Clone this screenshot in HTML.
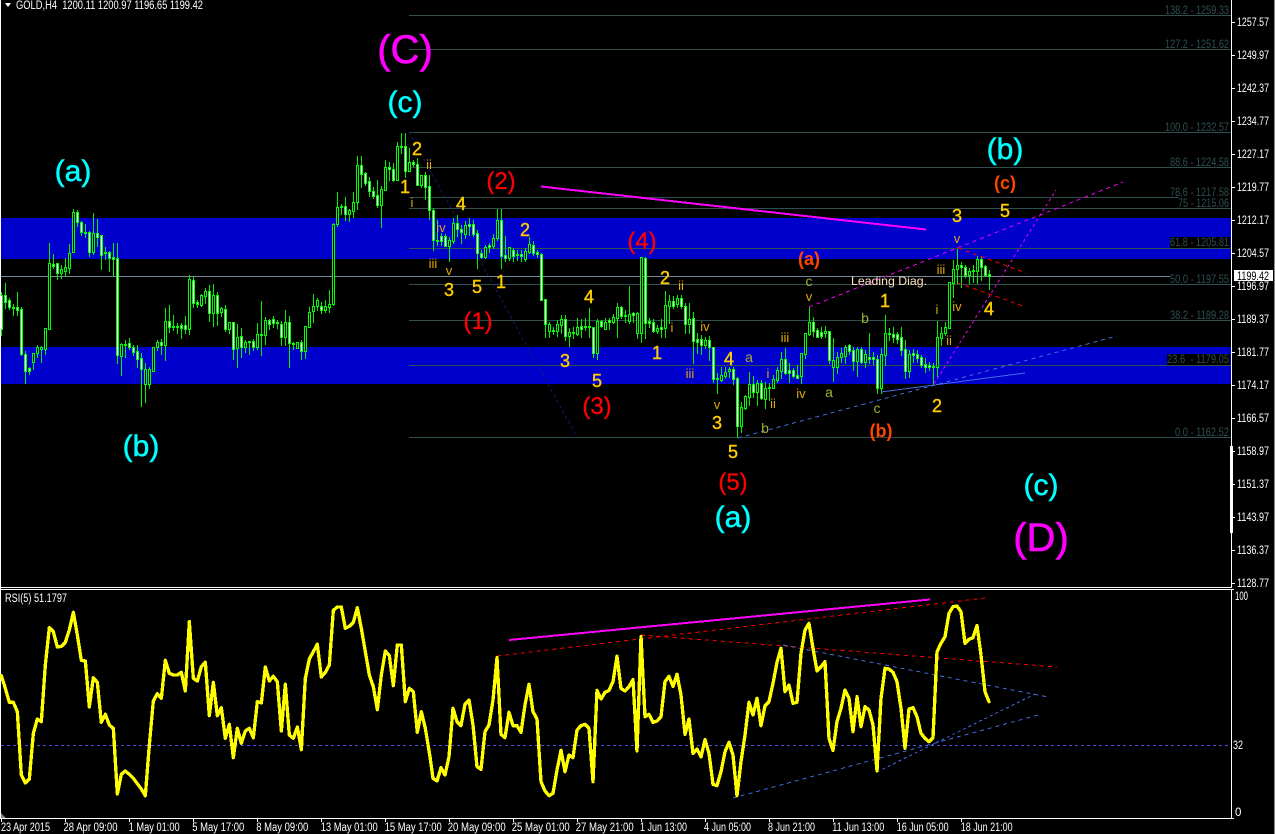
<!DOCTYPE html>
<html><head><meta charset="utf-8"><title>GOLD,H4</title>
<style>
html,body{margin:0;padding:0;background:#000;width:1275px;height:834px;overflow:hidden}
svg{display:block;position:absolute;left:0;top:0}
text{font-family:"Liberation Sans",Arial,sans-serif;white-space:pre}
.ax{fill:#fff;font-size:11.5px}
.fb{fill:#2F4F4F;font-size:11.5px}
.t{fill:#fff;font-size:11.5px}
.C{fill:#FF00FF;stroke:#FF00FF;stroke-width:.6px;font-size:40px;text-anchor:middle}
.c{fill:#00FFFF;stroke:#00FFFF;stroke-width:.5px;font-size:30px;text-anchor:middle}
.r{fill:#FF0000;stroke:#FF0000;stroke-width:.3px;font-size:24px;text-anchor:middle}
.o{fill:#FF4500;font-size:18px;font-weight:bold;text-anchor:middle}
.n{fill:#FFCC00;stroke:#FFCC00;stroke-width:.4px;font-size:18px;text-anchor:middle}
.s{fill:#E0A810;font-size:13px;text-anchor:middle}
.l{fill:#A4AE30;font-size:14px;text-anchor:middle}
</style></head>
<body>
<svg xmlns="http://www.w3.org/2000/svg" width="1275" height="834" viewBox="0 0 1275 834">
<rect width="1275" height="834" fill="#000"/>
<!-- blue zones -->
<rect x="1" y="218" width="1230" height="41" fill="#0000CD"/>
<rect x="1" y="347" width="1230" height="37" fill="#0000CD"/>
<!-- fib lines -->
<g stroke="#2F4F4F" stroke-width="1" shape-rendering="crispEdges">
<path d="M409 15.5H1231M409 49.5H1231M409 132.5H1231M409 167.5H1231M409 197.5H1178M409 208.5H1231M409 248.5H1231M409 284.5H1231M409 320.5H1231M409 365.5H1231M409 437.5H1231"/>
</g>
<path d="M1 276.5H1170" stroke="#778899" stroke-width="1" shape-rendering="crispEdges"/>
<!-- navy dotted -->
<path d="M409 132L576 435" stroke="#191970" stroke-width="1" stroke-dasharray="3 3" fill="none"/>
<!-- candles -->
<path id="wk" fill="none" stroke="#00EE00" stroke-width="1" shape-rendering="crispEdges"/>
<path id="bw" fill="#fff" stroke="#00FF00" stroke-width="1" shape-rendering="crispEdges"/>
<path id="bb" fill="#000" stroke="#00FF00" stroke-width="1" shape-rendering="crispEdges"/>
<!-- trend lines -->
<path d="M541 186.5L926 229.5" stroke="#FF00FF" stroke-width="2" fill="none" shape-rendering="crispEdges"/>
<g fill="none" stroke-width="1" shape-rendering="crispEdges">
<path d="M809 307L1123 182" stroke="#EE00EE" stroke-dasharray="4 4"/>
<path d="M934 384L1056 190" stroke="#EE00EE" stroke-dasharray="3 3"/>
<path d="M958 248L1026 273" stroke="#FF0000" stroke-dasharray="4 4"/>
<path d="M958 283L1026 307" stroke="#FF0000" stroke-dasharray="4 4"/>
<path d="M738 438L1117 336" stroke="#4169E1" stroke-dasharray="4 4"/>
<path d="M881 392L1025 373" stroke="#4169E1"/>
</g>
<!-- fib text -->
<rect x="1170" y="237" width="60" height="11" fill="#000"/>
<rect x="1167" y="354" width="63" height="11" fill="#000"/>
<rect x="1170" y="273" width="60" height="11" fill="#000"/>
<path d="M1170 284.5H1231" stroke="#2F4F4F" shape-rendering="crispEdges"/>
<g class="fb">
<text class="fb" x="1165" y="14" textLength="64" lengthAdjust="spacingAndGlyphs">138.2 - 1259.33</text>
<text class="fb" x="1165" y="48" textLength="64" lengthAdjust="spacingAndGlyphs">127.2 - 1251.62</text>
<text class="fb" x="1165" y="131" textLength="64" lengthAdjust="spacingAndGlyphs">100.0 - 1232.57</text>
<text class="fb" x="1170" y="166" textLength="59" lengthAdjust="spacingAndGlyphs">88.6 - 1224.58</text>
<text class="fb" x="1170" y="196" textLength="59" lengthAdjust="spacingAndGlyphs">78.6 - 1217.58</text>
<text class="fb" x="1178" y="207" textLength="51" lengthAdjust="spacingAndGlyphs">75 - 1215.06</text>
<text class="fb" x="1170" y="246" textLength="59" lengthAdjust="spacingAndGlyphs">61.8 - 1205.81</text>
<text class="fb" x="1170" y="283" textLength="59" lengthAdjust="spacingAndGlyphs">50.0 - 1197.55</text>
<text class="fb" x="1170" y="319" textLength="59" lengthAdjust="spacingAndGlyphs">38.2 - 1189.28</text>
<text class="fb" x="1167" y="363" textLength="62" lengthAdjust="spacingAndGlyphs">23.6  - 1179.05</text>
<text class="fb" x="1175" y="436" textLength="54" lengthAdjust="spacingAndGlyphs">0.0 - 1162.52</text>
</g>
<!-- wave labels -->
<text class="C" x="405" y="63">(C)</text>
<text class="C" x="1041" y="551">(D)</text>
<text class="c" x="405" y="112">(c)</text>
<text class="c" x="73" y="181">(a)</text>
<text class="c" x="141" y="456">(b)</text>
<text class="c" x="733" y="527">(a)</text>
<text class="c" x="1005" y="159">(b)</text>
<text class="c" x="1041" y="495">(c)</text>
<text class="r" x="501" y="189">(2)</text>
<text class="r" x="478" y="329">(1)</text>
<text class="r" x="597" y="414">(3)</text>
<text class="r" x="642" y="249">(4)</text>
<text class="r" x="733" y="490">(5)</text>
<text class="o" x="809" y="265">(a)</text>
<text class="o" x="881" y="437">(b)</text>
<text class="o" x="1005" y="189">(c)</text>
<text class="n" x="417" y="155">2</text>
<text class="n" x="405" y="193">1</text>
<text class="n" x="461" y="210">4</text>
<text class="n" x="449" y="296">3</text>
<text class="n" x="477" y="293">5</text>
<text class="n" x="501" y="288">1</text>
<text class="n" x="525" y="236">2</text>
<text class="n" x="589" y="303">4</text>
<text class="n" x="565" y="367">3</text>
<text class="n" x="597" y="387">5</text>
<text class="n" x="665" y="284">2</text>
<text class="n" x="657" y="359">1</text>
<text class="n" x="729" y="365">4</text>
<text class="n" x="717" y="429">3</text>
<text class="n" x="733" y="458">5</text>
<text class="n" x="885" y="307">1</text>
<text class="n" x="937" y="412">2</text>
<text class="n" x="957" y="222">3</text>
<text class="n" x="1005" y="217">5</text>
<text class="n" x="989" y="315">4</text>
<text class="s" x="429" y="169">ii</text>
<text class="s" x="412" y="207">i</text>
<text class="s" x="441" y="232">iv</text>
<text class="s" x="433" y="268">iii</text>
<text class="s" x="449" y="275">v</text>
<text class="s" x="681" y="290">ii</text>
<text class="s" x="672" y="332">i</text>
<text class="s" x="705" y="331">iv</text>
<text class="s" x="690" y="378">iii</text>
<text class="s" x="717" y="409">v</text>
<text class="s" x="768" y="378">i</text>
<text class="s" x="773" y="408">ii</text>
<text class="s" x="785" y="342">iii</text>
<text class="s" x="801" y="398">iv</text>
<text class="s" x="809" y="301">v</text>
<text class="s" x="941" y="274">iii</text>
<text class="s" x="937" y="314">i</text>
<text class="s" x="957" y="311">iv</text>
<text class="s" x="949" y="345">ii</text>
<text class="s" x="957" y="243">v</text>
<text class="l" x="749" y="362">a</text>
<text class="l" x="765" y="433">b</text>
<text class="l" x="809" y="286">c</text>
<text class="l" x="865" y="323">b</text>
<text class="l" x="829" y="397">a</text>
<text class="l" x="877" y="413">c</text>
<text x="851" y="285" fill="#FFE4C4" font-size="12" textLength="76" lengthAdjust="spacingAndGlyphs">Leading Diag.</text>
<!-- frame -->
<g stroke="#fff" stroke-width="1" shape-rendering="crispEdges" fill="none">
<path d="M0.5 0V819"/>
<path d="M1231.5 0V587"/>
<path d="M0 587.5H1232"/>
<path d="M0 589.5H1232"/>
<path d="M1231.5 589V818.5"/>
<path d="M0 818.5H1232"/>
<path d="M1232 22.5h3M1232 55.5h3M1232 88.5h3M1232 121.5h3M1232 154.5h3M1232 187.5h3M1232 220.5h3M1232 253.5h3M1232 286.5h3M1232 319.5h3M1232 352.5h3M1232 385.5h3M1232 418.5h3M1232 451.5h3M1232 484.5h3M1232 517.5h3M1232 550.5h3M1232 583.5h3"/>
<path d="M1232 589.5h2M1232 818.5h2"/>
<path d="M1.5 819v3M65.5 819v3M129.5 819v3M193.5 819v3M257.5 819v3M321.5 819v3M385.5 819v3M449.5 819v3M513.5 819v3M577.5 819v3M641.5 819v3M705.5 819v3M769.5 819v3M833.5 819v3M897.5 819v3M961.5 819v3"/>
</g>
<rect x="1230" y="446" width="3" height="87" fill="#fff"/>
<rect x="1274" y="0" width="1" height="834" fill="#8a8a8a"/>
<!-- price axis -->
<g>
<text class="ax" x="1237" y="26" textLength="32" lengthAdjust="spacingAndGlyphs">1257.57</text>
<text class="ax" x="1237" y="59" textLength="32" lengthAdjust="spacingAndGlyphs">1249.97</text>
<text class="ax" x="1237" y="92" textLength="32" lengthAdjust="spacingAndGlyphs">1242.37</text>
<text class="ax" x="1237" y="125" textLength="32" lengthAdjust="spacingAndGlyphs">1234.77</text>
<text class="ax" x="1237" y="158" textLength="32" lengthAdjust="spacingAndGlyphs">1227.17</text>
<text class="ax" x="1237" y="191" textLength="32" lengthAdjust="spacingAndGlyphs">1219.77</text>
<text class="ax" x="1237" y="224" textLength="32" lengthAdjust="spacingAndGlyphs">1212.17</text>
<text class="ax" x="1237" y="257" textLength="32" lengthAdjust="spacingAndGlyphs">1204.57</text>
<text class="ax" x="1237" y="290" textLength="32" lengthAdjust="spacingAndGlyphs">1196.97</text>
<text class="ax" x="1237" y="323" textLength="32" lengthAdjust="spacingAndGlyphs">1189.37</text>
<text class="ax" x="1237" y="356" textLength="32" lengthAdjust="spacingAndGlyphs">1181.77</text>
<text class="ax" x="1237" y="389" textLength="32" lengthAdjust="spacingAndGlyphs">1174.17</text>
<text class="ax" x="1237" y="422" textLength="32" lengthAdjust="spacingAndGlyphs">1166.57</text>
<text class="ax" x="1237" y="455" textLength="32" lengthAdjust="spacingAndGlyphs">1158.97</text>
<text class="ax" x="1237" y="488" textLength="32" lengthAdjust="spacingAndGlyphs">1151.37</text>
<text class="ax" x="1237" y="521" textLength="32" lengthAdjust="spacingAndGlyphs">1143.97</text>
<text class="ax" x="1237" y="554" textLength="32" lengthAdjust="spacingAndGlyphs">1136.37</text>
<text class="ax" x="1237" y="587" textLength="32" lengthAdjust="spacingAndGlyphs">1128.77</text>
</g>
<rect x="1234" y="270" width="39" height="11" fill="#fff"/>
<text x="1237" y="280" font-size="11.5" fill="#000" textLength="32" lengthAdjust="spacingAndGlyphs">1199.42</text>
<!-- header -->
<polygon points="5,3 11,3 8,7" fill="#fff"/>
<text class="t" x="16" y="9" textLength="187" lengthAdjust="spacingAndGlyphs">GOLD,H4  1200.11 1200.97 1196.65 1199.42</text>
<!-- RSI -->
<text class="t" x="5" y="602" textLength="62" lengthAdjust="spacingAndGlyphs">RSI(5) 51.1797</text>
<path d="M1 745.5H1231" stroke="#5050E0" stroke-dasharray="3 3" shape-rendering="crispEdges"/>
<g fill="none" stroke-width="1" shape-rendering="crispEdges">
<path d="M497 656L985 598" stroke="#FF0000" stroke-dasharray="4 4"/>
<path d="M641 635L1057 667" stroke="#FF0000" stroke-dasharray="4 4"/>
<path d="M783 645L1048 697" stroke="#4169E1" stroke-dasharray="4 4"/>
<path d="M733 798L1042 714" stroke="#4169E1" stroke-dasharray="4 4"/>
<path d="M877 772L1035 694" stroke="#4169E1" stroke-dasharray="3 3"/>
</g>
<path d="M509 640L930 599.5" stroke="#FF00FF" stroke-width="2" fill="none" shape-rendering="crispEdges"/>
<g fill="none" stroke="#FFFF00" stroke-width="10" stroke-linejoin="round" stroke-linecap="round" shape-rendering="crispEdges">
<polyline transform="translate(0,585) scale(.33333)" points="4,272 16,310 28,352 40,352 52,380 64,570 76,594 88,582 100,445 112,402 124,410 136,240 148,128 160,140 172,186 184,184 196,172 208,135 220,82 232,150 244,226 256,228 268,366 280,278 292,292 304,412 316,388 328,420 340,430 352,627 364,568 376,558 388,568 400,580 412,596 424,612 436,632 448,480 460,348 472,326 484,340 496,226 508,265 520,270 532,270 544,262 556,318 568,110 580,280 592,288 604,245 616,232 628,392 640,292 652,392 664,368 676,460 688,418 700,518 712,430 724,475 736,438 748,430 760,458 772,350 784,354 796,246 808,288 820,274 832,290 844,438 856,298 868,450 880,460 892,426 904,494 916,280 928,222 940,200 952,178 964,276 976,262 988,240 1000,76 1012,66 1024,66 1036,130 1048,124 1060,112 1072,68 1084,130 1096,200 1108,270 1120,305 1132,374 1144,270 1156,198 1168,212 1180,302 1192,180 1204,180 1216,350 1228,310 1240,320 1252,442 1264,380 1276,430 1290,515"/>
<polyline transform="translate(430,585) scale(.33333)" points="0,515 9,580 21,588 33,548 45,570 57,515 69,370 81,410 93,422 105,358 117,345 129,420 141,545 153,553 165,440 177,420 189,345 201,218 213,448 225,458 237,382 249,422 261,422 273,442 285,360 297,298 309,380 321,402 333,590 345,618 357,632 369,625 381,555 393,496 405,560 417,510 429,518 441,435 453,422 465,418 477,430 489,590 501,316 513,342 525,322 537,316 549,290 561,214 573,310 585,318 597,305 609,284 621,498 633,155 645,395 657,388 669,412 681,408 693,395 705,290 717,274 729,304 741,268 753,330 765,448 777,402 789,505 801,492 813,516 825,464 837,505 849,598 861,602 873,560 885,500 897,472 909,510 921,632 933,530 945,450 957,352 969,390 981,340 993,422 1005,362 1017,350 1029,295 1041,232 1053,190 1065,320 1077,300 1089,355 1101,352 1113,205 1125,135 1137,115 1149,190 1161,258 1173,245 1185,230 1197,460 1209,496 1221,410 1233,370 1245,315 1257,340 1269,440 1281,338"/>
<polyline transform="translate(850,585) scale(.33333)" points="21,335 33,425 45,365 57,375 69,420 81,558 93,340 105,250 117,252 129,262 141,290 153,370 165,490 177,372 189,368 201,395 213,445 225,460 237,470 249,458 261,200 273,175 285,155 297,85 309,65 321,63 333,80 345,175 357,163 369,158 381,122 393,210 405,320 417,350"/>
</g>
<text class="ax" x="1235" y="600" textLength="13" lengthAdjust="spacingAndGlyphs">100</text>
<text class="ax" x="1233" y="749" textLength="10" lengthAdjust="spacingAndGlyphs">32</text>
<text class="ax" x="1235" y="816">0</text>
<polygon points="1,813 6,818 1,818" fill="#778899"/>
<!-- time axis -->
<g>
<text class="t" x="1" y="831" textLength="49" lengthAdjust="spacingAndGlyphs">23 Apr 2015</text>
<text class="t" x="63.5" y="831" textLength="54" lengthAdjust="spacingAndGlyphs">28 Apr 09:00</text>
<text class="t" x="128.7" y="831" textLength="51" lengthAdjust="spacingAndGlyphs">1 May 01:00</text>
<text class="t" x="192.3" y="831" textLength="52" lengthAdjust="spacingAndGlyphs">5 May 17:00</text>
<text class="t" x="256.3" y="831" textLength="52" lengthAdjust="spacingAndGlyphs">8 May 09:00</text>
<text class="t" x="320.7" y="831" textLength="57" lengthAdjust="spacingAndGlyphs">13 May 01:00</text>
<text class="t" x="384.7" y="831" textLength="57" lengthAdjust="spacingAndGlyphs">15 May 17:00</text>
<text class="t" x="447.7" y="831" textLength="58" lengthAdjust="spacingAndGlyphs">20 May 09:00</text>
<text class="t" x="511.7" y="831" textLength="58" lengthAdjust="spacingAndGlyphs">25 May 01:00</text>
<text class="t" x="575.7" y="831" textLength="58" lengthAdjust="spacingAndGlyphs">27 May 21:00</text>
<text class="t" x="640" y="831" textLength="47" lengthAdjust="spacingAndGlyphs">1 Jun 13:00</text>
<text class="t" x="704" y="831" textLength="47" lengthAdjust="spacingAndGlyphs">4 Jun 05:00</text>
<text class="t" x="768" y="831" textLength="47" lengthAdjust="spacingAndGlyphs">8 Jun 21:00</text>
<text class="t" x="832.3" y="831" textLength="52" lengthAdjust="spacingAndGlyphs">11 Jun 13:00</text>
<text class="t" x="896.7" y="831" textLength="52" lengthAdjust="spacingAndGlyphs">16 Jun 05:00</text>
<text class="t" x="960.7" y="831" textLength="52" lengthAdjust="spacingAndGlyphs">18 Jun 21:00</text>
</g>
</svg>
<script>
(function(){
var w='',a='',b='';
function seg(x0,y0,d){
 for(var i=0;i<d.length;i++){
  var c=d[i],x=x0+4*i,h=Math.round(y0+c[0]/3),t=Math.round(y0+c[1]/3),o=Math.round(y0+c[2]/3),l=Math.round(y0+c[3]/3);
  w+='M'+(x+.5)+' '+h+'V'+(l+1);
  if(o<=t)o=t+1;
  var r='M'+(x-.5)+' '+(t+.5)+'h2V'+(o+.5)+'h-2z';
  if(c[4])a+=r;else b+=r;
 }
}
seg(1,190,[[305,316,418,435,1],[280,316,335,355,1],[325,330,352,358,1],[342,351,353,375,1],[306,352,359,375,1],[352,358,493,495,1],[484,493,542,578,1],[530,535,542,552,1],[488,490,515,537,0],[465,472,490,500,0],[468,472,478,515,0],[415,415,476,492,0],[160,220,416,416,0],[193,221,227,233,1],[220,220,248,267,1],[226,238,250,264,0],[205,232,243,258,0],[163,190,233,249,0],[57,67,187,187,0],[60,67,97,108,1],[94,97,127,135,1],[102,127,129,140,1],[124,127,185,198,1],[69,130,185,192,0],[87,130,140,168,1],[135,136,196,237,1],[170,186,188,207,1],[183,187,203,243,1],[160,202,206,255,1],[160,205,496,518,1],[458,462,498,555,0],[450,461,465,500,1],[445,458,472,478,1],[465,472,485,495,1],[465,484,508,530,1],[488,505,538,647,1],[520,538,581,635,0],[532,538,581,593,0],[472,472,542,542,0],[450,457,472,480,0],[448,457,464,492,1],[355,394,464,510,0],[345,394,410,426,1],[375,408,410,420,1],[398,408,410,428,1],[400,406,413,444,1],[378,406,418,430,1],[255,268,418,432,0],[262,271,338,352,1],[330,337,341,350,1],[312,316,344,348,0],[293,304,318,340,0],[285,304,370,392,1],[282,316,370,408,0],[306,316,368,405,1],[350,355,367,378,0],[346,358,416,424,1],[396,397,416,428,0],[396,397,478,506,1],[403,440,474,530,0],[415,439,472,500,1],[450,457,472,486,0],[453,454,456,492,1],[448,454,470,480,1],[400,433,470,477,0],[334,433,436,495,1],[380,391,436,462,0],[388,391,403,417,1],[378,388,398,410,1],[390,397,400,415,1],[393,403,440,465,1],[360,397,440,465,0],[378,397,460,530,1],[455,460,463,476,1],[455,455,473,473,0],[450,457,484,506,1],[408,409,484,504,0],[350,367,410,412,0],[312,349,362,396,0],[324,331,349,360,0],[335,347,360,368,1],[330,349,359,365,0],[300,343,351,365,0],[100,103,343,345,0],[7,52,103,108,0],[42,48,52,72,1],[20,49,71,90,1],[57,61,71,93,0],[6,37,62,80,0]]);
seg(357,125,[[93,121,232,252,0],[93,121,146,187,1],[140,145,173,180,1],[155,169,198,212,1],[185,198,213,218,1],[165,211,240,245,1],[182,193,239,305,0],[105,127,195,195,0],[110,126,133,165,1],[115,133,164,168,1],[52,64,164,164,0],[24,64,66,85,1]]);
seg(405,130,[[10,48,122,140,1],[55,97,122,122,0],[90,96,103,108,1],[85,103,165,165,1],[135,136,165,172,0],[125,136,170,208,1],[135,169,241,268,1],[233,241,329,360,1],[270,329,334,345,1],[310,319,332,345,1],[312,319,347,348,1],[320,331,347,392,0],[265,280,332,340,0],[255,280,298,318,1],[285,298,307,340,1],[272,286,311,325,0],[265,283,287,315,1],[270,283,311,318,1],[300,310,370,413,1],[360,370,380,385,1],[345,352,381,385,0],[340,346,351,365,1],[312,325,347,355,0],[237,271,325,330,0],[237,271,377,413,1],[318,376,383,392,1],[350,352,383,390,0],[355,361,377,392,1],[360,372,376,390,1],[360,373,378,393,1],[355,364,386,392,0],[320,341,365,370,0],[333,346,368,375,1],[360,367,373,380,1],[370,372,509,510,1],[508,508,583,620,1],[575,583,602,622,0],[590,601,603,612,1],[570,582,602,618,0],[555,568,584,610,0],[555,568,618,630,1],[595,606,618,648,0],[590,606,610,625,1],[565,592,611,615,0],[568,588,596,620,1],[565,587,592,600,1],[535,587,592,620,1],[590,592,670,682,1],[568,573,670,686,0],[570,574,587,590,1],[565,575,596,597,0],[565,571,577,596,1],[552,561,575,580,0],[518,532,563,620,0],[527,532,557,565,1],[540,555,557,575,1],[467,553,573,580,0],[545,549,556,575,1],[545,550,608,625,0],[380,382,608,635,0],[380,385,580,625,1],[565,573,580,590,1],[568,576,602,605,1],[585,595,603,610,0],[568,592,596,622,1],[484,526,593,622,0],[495,514,528,580,0],[498,514,527,535,1],[495,505,522,530,0],[495,505,529,535,1],[520,528,583,610,1],[520,567,583,610,0],[545,565,632,700,1],[610,628,636,670,1],[615,628,644,672,1],[620,631,644,655,0],[618,631,652,690,1],[650,652,746,756,1],[730,744,748,788,1],[712,736,750,754,0],[712,725,737,745,0],[712,718,724,740,0],[712,718,746,762,1],[740,745,887,920,1],[815,832,887,905,0],[795,798,834,838,0],[725,763,800,825,0],[738,763,785,800,1],[750,760,786,825,0],[750,760,803,808,1],[755,775,806,833,0],[760,771,775,810,1],[735,748,775,775,0],[710,720,750,755,0],[665,688,722,745,0],[655,688,730,733,1],[700,721,729,755,1],[715,721,738,742,1],[705,736,743,745,1],[670,670,737,760,0],[610,610,672,685,0],[532,576,612,615,0],[560,576,602,618,1],[595,601,620,622,1]]);
seg(821,170,[[470,486,497,505,1],[468,484,490,500,0],[484,484,570,580,1],[503,570,590,633,0],[545,562,590,610,0],[535,550,562,575,0],[525,530,558,580,0],[523,525,542,552,1],[530,540,572,600,1],[530,538,574,618,0],[530,538,575,580,1],[540,553,576,590,0],[490,560,566,580,1],[545,560,568,583,1],[555,568,655,670,1],[535,553,655,670,0],[435,490,555,585,0],[475,490,492,510,1],[472,492,500,515,1],[485,493,506,520,1],[472,502,539,555,1],[510,538,602,625,1],[540,553,603,620,0],[538,550,556,575,1],[540,553,563,575,1],[555,562,585,590,1],[565,583,590,605,1],[575,585,590,600,1],[578,588,590,645,1],[453,502,590,618,0],[470,488,505,525,0],[455,472,490,495,0],[336,337,473,475,0],[270,298,338,382,0],[237,286,298,340,0],[275,285,290,350,1],[285,290,315,320,1],[295,304,315,340,0],[285,300,304,335,1],[258,268,302,340,0],[258,268,290,330,1],[285,288,314,318,1],[300,311,318,357,1]]);
document.getElementById('wk').setAttribute('d',w);
document.getElementById('bw').setAttribute('d',a);
document.getElementById('bb').setAttribute('d',b);
})();
</script>
</body></html>
